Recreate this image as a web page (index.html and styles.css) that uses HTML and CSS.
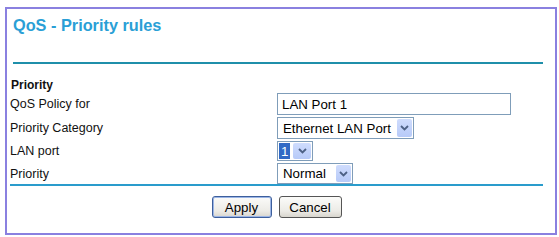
FILE: index.html
```html
<!DOCTYPE html>
<html>
<head>
<meta charset="utf-8">
<link rel="stylesheet" href="styles.css">
</head>
<body>
<div class="panel">
  <h1 class="title">QoS - Priority rules</h1>
  <div class="rule rule-top"></div>
  <div class="section">Priority</div>
  <div class="form">
    <div class="label">QoS Policy for</div>
    <div class="field"><input class="text" type="text" value="LAN Port 1"></div>
    <div class="label">Priority Category</div>
    <div class="field">
      <div class="combo combo-cat"><span class="combo-text">Ethernet LAN Port</span><span class="arrow"><svg width="9" height="6" viewBox="0 0 9 6"><path d="M1 1 L4.5 4.5 L8 1" fill="none" stroke="#4d6185" stroke-width="1.8"/></svg></span></div>
    </div>
    <div class="label">LAN port</div>
    <div class="field">
      <div class="combo combo-port"><span class="combo-text sel">1</span><span class="arrow"><svg width="9" height="6" viewBox="0 0 9 6"><path d="M1 1 L4.5 4.5 L8 1" fill="none" stroke="#4d6185" stroke-width="1.8"/></svg></span></div>
    </div>
    <div class="label">Priority</div>
    <div class="field">
      <div class="combo combo-pri"><span class="combo-text">Normal</span><span class="arrow"><svg width="9" height="6" viewBox="0 0 9 6"><path d="M1 1 L4.5 4.5 L8 1" fill="none" stroke="#4d6185" stroke-width="1.8"/></svg></span></div>
    </div>
  </div>
  <div class="rule rule-bottom"></div>
  <div class="buttons">
    <button class="btn btn-default" type="button">Apply</button>
    <button class="btn" type="button">Cancel</button>
  </div>
</div>
</body>
</html>
```

FILE: styles.css
```css
body {
  margin: 0;
  background: #ffffff;
  font-family: "Liberation Sans", Arial, sans-serif;
  color: #000;
}

.panel {
  margin: 7px 0 0 5px;
  width: 552px;
  height: 228px;
  box-sizing: border-box;
  border: 2px solid #8a80e0;
  padding: 0 12px 0 3px;
}

.title {
  margin: 0;
  padding: 7px 0 0 3px;
  font-size: 16.3px;
  line-height: 18px;
  font-weight: bold;
  color: #2a9fd6;
}

.rule {
  height: 2px;
  background: #1f8faa;
}

.rule-top {
  margin: 28px 0 0 3px;
}

.rule-bottom {
  background: #2a9ccc;
}

.section {
  margin-top: 14px;
  font-size: 12px;
  line-height: 14px;
  font-weight: bold;
  padding-left: 1px;
  color: #111;
}

.form {
  margin-top: 1px;
  display: grid;
  grid-template-columns: 267px auto;
  grid-template-rows: 22px 22px 20px 21px;
  row-gap: 2px;
}

.label {
  font-size: 12.5px;
  display: flex;
  align-items: center;
  color: #111;
}

.field {
  display: flex;
  align-items: center;
}

.text {
  width: 234px;
  height: 22px;
  box-sizing: border-box;
  border: 1px solid #7f9db9;
  padding: 0 0 0 4px;
  margin: 0;
  font-family: "Liberation Sans", Arial, sans-serif;
  font-size: 13.3px;
  color: #000;
  outline: none;
}

.combo {
  display: flex;
  align-items: stretch;
  height: 100%;
  box-sizing: border-box;
  border: 1px solid #7f9db9;
  background: #fff;
  font-size: 13.3px;
}

.combo-cat { width: 137px; }
.combo-port { width: 36px; }
.combo-pri { width: 76px; }

.combo-text {
  flex: 1;
  display: flex;
  align-items: center;
  padding-left: 5px;
  white-space: nowrap;
}

.combo-text.sel {
  flex: none;
  margin: 1px;
  padding: 0 2px;
  background: #316ac5;
  color: #fff;
}

.arrow {
  width: 15px;
  margin: 1px;
  margin-left: auto;
  border-radius: 2px;
  background: linear-gradient(#cfdcfd, #b7caf8);
  display: flex;
  align-items: center;
  justify-content: center;
}

.combo-port .arrow { width: 18px; }

.buttons {
  margin-top: 10px;
  display: flex;
  justify-content: center;
  gap: 7px;
}

.btn {
  height: 22px;
  box-sizing: border-box;
  padding: 0 8px;
  margin: 0;
  font-family: "Liberation Sans", Arial, sans-serif;
  font-size: 13.3px;
  color: #000;
  border: 1px solid #555;
  border-radius: 3px;
  background: linear-gradient(#fbfbf9, #ecebe6 70%, #d8d6ce);
}

.btn-default {
  width: 60px;
  border-color: #3d5f9c;
  box-shadow: inset 0 0 0 1px #9bb5e6;
}

.btn:not(.btn-default) {
  width: 63px;
}
```
